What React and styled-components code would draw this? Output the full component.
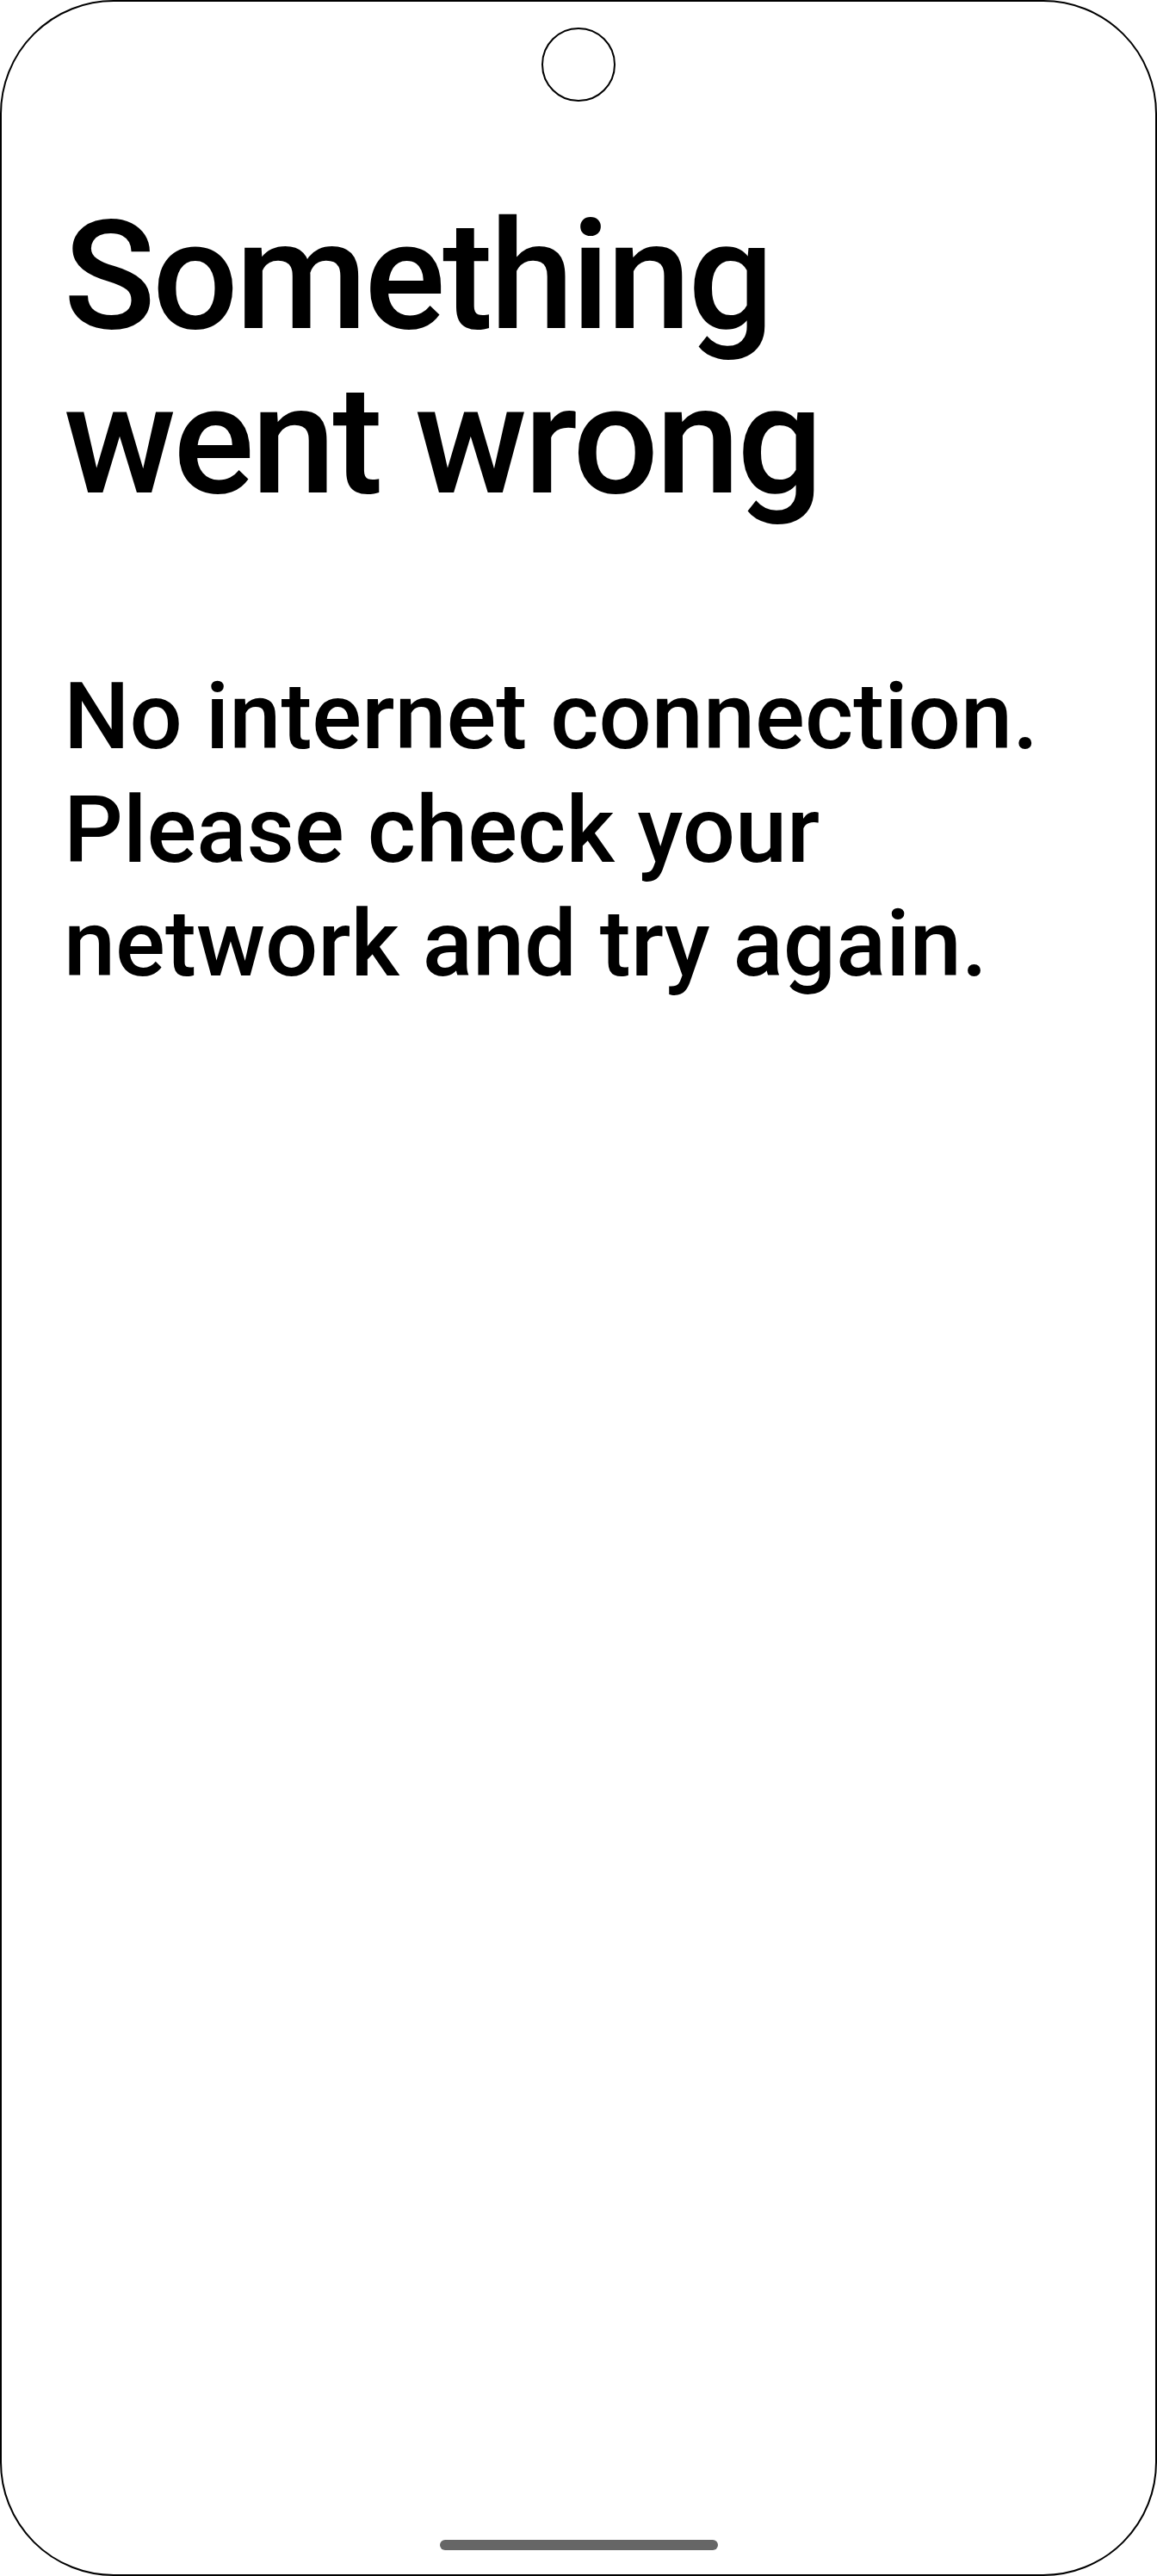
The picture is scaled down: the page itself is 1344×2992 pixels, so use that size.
import styled, { createGlobalStyle } from 'styled-components';

/* ── Global ──────────────────────────────────────────────────── */
const Global = createGlobalStyle`
  html,body{margin:0;padding:0;background:#fff;}
  body{font-family:Roboto,"Noto Sans",sans-serif;color:#000;}
`;

/* ── Styled Components ───────────────────────────────────────── */
const Screen = styled.div`
  box-sizing:border-box;width:1344px;height:2992px;
  border:2px solid #000;border-radius:132px;
  display:flex;flex-direction:column;background:#fff;overflow:hidden;
`;
const StatusBar = styled.div`display:flex;justify-content:center;padding-top:30px;`;
const Camera = styled.div`
  box-sizing:border-box;width:86px;height:86px;border-radius:50%;border:2px solid #000;
`;
const Content = styled.main`flex:1;padding:108px 72px 0;`;
const Title = styled.h1`
  margin:0;font-size:176px;line-height:191px;font-weight:500;letter-spacing:-3.5px;
`;
const Message = styled.p`
  margin:158px 0 0;font-size:108px;line-height:132px;font-weight:500;
`;
const NavArea = styled.div`display:flex;justify-content:center;padding-bottom:28px;`;
const HomeBar = styled.div`width:323px;height:12px;border-radius:6px;background:#666;`;

/* ── Component ───────────────────────────────────────────────── */
export default function App() {
    return (
        <>
            <Global />
            <Screen>
                <StatusBar><Camera aria-hidden="true" /></StatusBar>
                <Content>
                    <Title>Something<br />went wrong</Title>
                    <Message>No internet connection.<br />Please check your<br />network and try again.</Message>
                </Content>
                <NavArea><HomeBar /></NavArea>
            </Screen>
        </>
    );
}
